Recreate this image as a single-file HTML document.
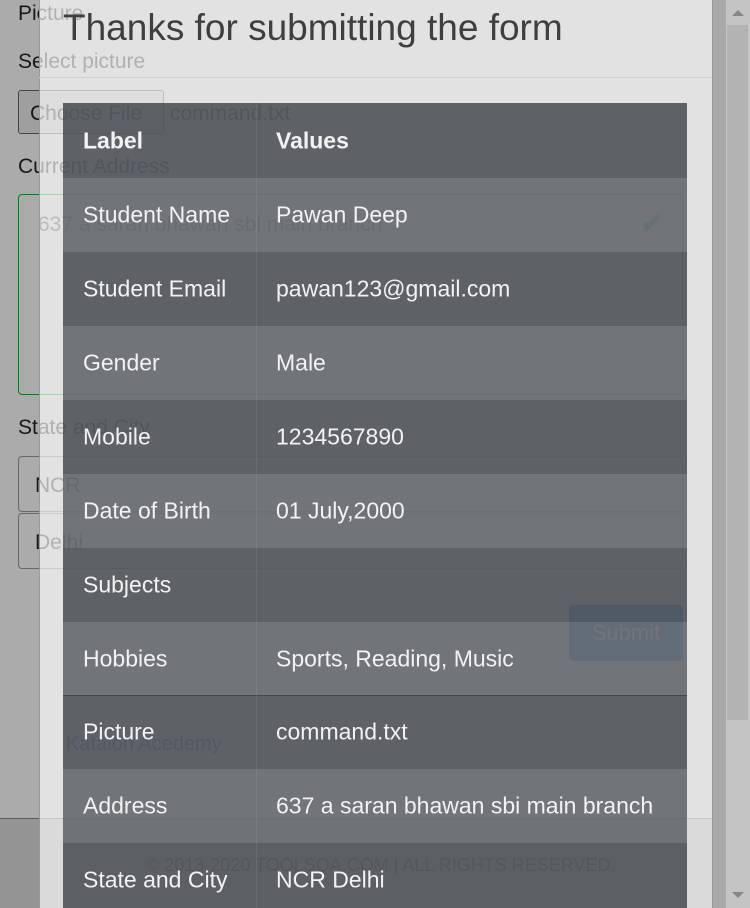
<!DOCTYPE html>
<html style="overflow:hidden"><head><style>
*{margin:0;padding:0;box-sizing:border-box}
html,body{width:750px;height:908px;overflow:hidden}
body{position:relative;background:#fff;font-family:"Liberation Sans",sans-serif;color:#212529}
.a{position:absolute}
.t{font-size:21px;white-space:nowrap}
#ov{position:absolute;left:0;top:0;width:750px;height:908px;background:rgba(0,0,0,0.33)}
#modal{position:absolute;left:39px;top:0;width:673px;height:908px;background:rgba(255,255,255,0.66);border-left:1px solid #999}
.row{position:absolute;left:63px;width:624px;height:74px;color:#f2f2f2;font-size:23px}
.row span{position:absolute;top:50%;transform:translateY(-50%);white-space:nowrap}
.row .l{left:20px}.row .v{left:213px}
.row:after{content:"";position:absolute;left:193px;top:0;width:1px;height:100%;background:rgba(255,255,255,0.08)}
.d{background:rgba(52,58,64,0.76)}
.g{background:rgba(78,83,89,0.76)}
</style></head><body>
<div class="a t" style="left:18px;top:2px">Picture</div>
<div class="a t" style="left:18px;top:50px">Select picture</div>
<div class="a" style="left:18px;top:90px;width:146px;height:44px;border:1px solid #666;border-radius:3px;background:#eee"></div>
<div class="a t" style="left:30px;top:102px">Choose File</div>
<div class="a t" style="left:170px;top:102px">command.txt</div>
<div class="a t" style="left:18px;top:155px">Current Address</div>
<div class="a" style="left:18px;top:194px;width:665px;height:201px;border:1px solid #28a745;border-radius:4px"></div>
<div class="a t" style="left:38px;top:213px;color:#555">637 a saran bhawan sbi main branch</div>
<div class="a" style="left:641px;top:208px;color:#28a745;font-size:26px;font-weight:bold">✔</div>
<div class="a t" style="left:18px;top:416px">State and City</div>
<div class="a" style="left:18px;top:456px;width:665px;height:56px;border:1px solid #999;border-radius:4px"></div>
<div class="a t" style="left:35px;top:474px">NCR</div>
<div class="a" style="left:18px;top:513px;width:665px;height:56px;border:1px solid #999;border-radius:4px"></div>
<div class="a t" style="left:35px;top:531px">Delhi</div>
<div class="a" style="left:569px;top:605px;width:114px;height:56px;background:#0062cc;border-radius:4px;color:#fff;font-size:22px;text-align:center;line-height:56px">Submit</div>
<div class="a t" style="left:66px;top:733px;color:#0056b3;font-size:20px">Katalon Acedemy</div>
<div class="a" style="left:0;top:818px;width:750px;height:1px;background:#888"></div>
<div class="a" style="left:0;top:819px;width:750px;height:89px;background:#ddd"></div>
<div class="a" style="left:146px;top:855px;font-size:18px;color:#333">© 2013-2020 TOOLSQA.COM | ALL RIGHTS RESERVED.</div>
<div id="ov"></div>
<div id="modal"></div>
<div class="a" style="left:63px;top:7px;font-size:37px;color:#3f3f3f;white-space:nowrap">Thanks for submitting the form</div>
<div class="a" style="left:39px;top:77px;width:673px;height:1px;background:#d0d0d0"></div>
<div class="row d" style="top:103px;height:75px;font-weight:bold"><span class="l">Label</span><span class="v">Values</span></div>
<div class="row g" style="top:178px"><span class="l">Student Name</span><span class="v">Pawan Deep</span></div>
<div class="row d" style="top:252px"><span class="l">Student Email</span><span class="v">pawan123@gmail.com</span></div>
<div class="row g" style="top:326px"><span class="l">Gender</span><span class="v">Male</span></div>
<div class="row d" style="top:400px"><span class="l">Mobile</span><span class="v">1234567890</span></div>
<div class="row g" style="top:474px"><span class="l">Date of Birth</span><span class="v">01 July,2000</span></div>
<div class="row d" style="top:548px"><span class="l">Subjects</span><span class="v"></span></div>
<div class="row g" style="top:622px"><span class="l">Hobbies</span><span class="v">Sports, Reading, Music</span></div>
<div class="row d" style="top:695px"><span class="l">Picture</span><span class="v">command.txt</span></div>
<div class="row g" style="top:769px"><span class="l">Address</span><span class="v">637 a saran bhawan sbi main branch</span></div>
<div class="row d" style="top:843px;height:65px"><span class="l" style="top:37px">State and City</span><span class="v" style="top:37px">NCR Delhi</span></div>
<div class="a" style="left:712px;top:0;width:14px;height:908px;background:#a9a9a9;border-left:1px solid #999"></div>
<div class="a" style="left:726px;top:0;width:24px;height:908px;background:#c4c4c4"></div>
<div class="a" style="left:727px;top:25px;width:21px;height:695px;background:#b3b3b3"></div>
<div class="a" style="left:732px;top:10px;width:0;height:0;border-left:6px solid transparent;border-right:6px solid transparent;border-bottom:6px solid #888"></div>
<div class="a" style="left:732px;top:892px;width:0;height:0;border-left:6px solid transparent;border-right:6px solid transparent;border-top:6px solid #888"></div>
</body></html>
